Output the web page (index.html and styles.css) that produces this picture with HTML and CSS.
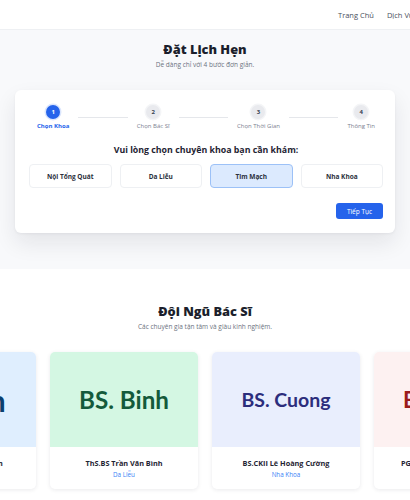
FILE: index.html
```html
<!DOCTYPE html>
<html lang="vi">
<head>
<meta charset="utf-8">
<title>Đặt Lịch Hẹn</title>
<link rel="stylesheet" href="styles.css">
</head>
<body>
<header class="topbar">
  <nav class="nav">
    <a class="nav-link">Trang Chủ</a>
    <a class="nav-link">Dịch Vụ</a>
  </nav>
</header>

<section class="hero">
  <h1 class="title">Đặt Lịch Hẹn</h1>
  <p class="subtitle">Dễ dàng chỉ với 4 bước đơn giản.</p>

  <div class="booking-card">
    <div class="stepper">
      <div class="step active">
        <span class="step-circle">1</span>
        <span class="step-label">Chọn Khoa</span>
      </div>
      <div class="step-line"></div>
      <div class="step">
        <span class="step-circle">2</span>
        <span class="step-label">Chọn Bác Sĩ</span>
      </div>
      <div class="step-line"></div>
      <div class="step">
        <span class="step-circle">3</span>
        <span class="step-label">Chọn Thời Gian</span>
      </div>
      <div class="step-line"></div>
      <div class="step">
        <span class="step-circle">4</span>
        <span class="step-label">Thông Tin</span>
      </div>
    </div>

    <h2 class="question">Vui lòng chọn chuyên khoa bạn cần khám:</h2>
    <div class="options">
      <button class="option">Nội Tổng Quát</button>
      <button class="option">Da Liễu</button>
      <button class="option selected">Tim Mạch</button>
      <button class="option">Nha Khoa</button>
    </div>
    <div class="actions">
      <button class="btn-primary">Tiếp Tục</button>
    </div>
  </div>
</section>

<section class="team">
  <h2 class="title">Đội Ngũ Bác Sĩ</h2>
  <p class="subtitle">Các chuyên gia tận tâm và giàu kinh nghiệm.</p>
  <div class="doctors">
    <div class="doctor">
      <div class="doctor-photo blue">BS. An</div>
      <div class="doctor-info">
        <div class="doctor-name">PGS.TS Nguyễn Văn An</div>
        <div class="doctor-spec">Nội Tổng Quát</div>
      </div>
    </div>
    <div class="doctor">
      <div class="doctor-photo green">BS. Binh</div>
      <div class="doctor-info">
        <div class="doctor-name">ThS.BS Trần Văn Bình</div>
        <div class="doctor-spec">Da Liễu</div>
      </div>
    </div>
    <div class="doctor">
      <div class="doctor-photo indigo">BS. Cuong</div>
      <div class="doctor-info">
        <div class="doctor-name">BS.CKII Lê Hoàng Cường</div>
        <div class="doctor-spec">Nha Khoa</div>
      </div>
    </div>
    <div class="doctor">
      <div class="doctor-photo red">BS. Dung</div>
      <div class="doctor-info">
        <div class="doctor-name">PGS.TS Phạm Thị Mỹ Dung</div>
        <div class="doctor-spec">Tim Mạch</div>
      </div>
    </div>
  </div>
</section>
</body>
</html>
```

FILE: styles.css
```css
* { box-sizing: border-box; }

body {
  margin: 0;
  font-family: "Open Sans", "Noto Sans", "DejaVu Sans", sans-serif;
  color: #1f2433;
  background: #ffffff;
}

.topbar {
  height: 30px;
  background: #ffffff;
  border-bottom: 1px solid #eef0f3;
  display: flex;
  align-items: center;
  padding-left: 338px;
  overflow: hidden;
  white-space: nowrap;
}

.nav {
  display: flex;
  gap: 13px;
  flex-shrink: 0;
}

.nav-link {
  font-size: 7.5px;
  color: #4b5160;
}

.hero {
  background: #f8f9fb;
  padding: 9px 15px 36px;
  text-align: center;
}

.title {
  margin: 0;
  font-size: 12.8px;
  line-height: 20px;
  font-weight: 800;
  color: #1b1f2c;
}

.subtitle {
  margin: 1px 0 0;
  font-size: 6.5px;
  line-height: 10px;
  color: #6b7280;
}

.booking-card {
  margin-top: 20px;
  background: #ffffff;
  border-radius: 6px;
  box-shadow: 0 10px 22px rgba(17, 24, 39, 0.09), 0 1px 3px rgba(17, 24, 39, 0.05);
  padding: 15px 12px 14px 14px;
  text-align: left;
}

.stepper {
  display: flex;
  align-items: center;
  padding: 0 8px;
}

.step {
  display: flex;
  flex-direction: column;
  align-items: center;
  gap: 3px;
}

.step-circle {
  width: 14px;
  height: 14px;
  border-radius: 50%;
  background: #e9eaee;
  box-shadow: 0 0 0 1.5px #f4f5f7;
  color: #374151;
  font-size: 6px;
  font-weight: 700;
  display: flex;
  align-items: center;
  justify-content: center;
}

.step-label {
  font-size: 6px;
  line-height: 8px;
  color: #7b8190;
  white-space: nowrap;
}

.step.active .step-circle {
  background: #2563eb;
  box-shadow: 0 0 0 1.5px #dbe6fd;
  color: #ffffff;
}

.step.active .step-label {
  color: #2563eb;
  font-weight: 700;
}

.step-line {
  flex: 1;
  height: 1px;
  background: #e5e7eb;
  margin: 0 9px;
}

.question {
  margin: 14px 0 0;
  text-align: center;
  font-size: 8.8px;
  line-height: 13px;
  font-weight: 700;
  color: #1f2433;
}

.options {
  margin-top: 7px;
  display: grid;
  grid-template-columns: repeat(4, 1fr);
  gap: 8px;
}

.option {
  height: 24px;
  border: 1px solid #eef0f3;
  border-radius: 4px;
  background: #ffffff;
  font-family: inherit;
  font-size: 6.5px;
  font-weight: 700;
  color: #2a2f3c;
  padding: 0;
}

.option.selected {
  background: #dceafe;
  border-color: #9cc1f7;
}

.actions {
  margin-top: 15px;
  display: flex;
  justify-content: flex-end;
}

.btn-primary {
  width: 47px;
  height: 16px;
  border: none;
  border-radius: 3px;
  background: #2563eb;
  color: #ffffff;
  font-family: inherit;
  font-size: 6.5px;
  font-weight: 500;
  padding: 0;
}

.team {
  padding: 32px 0 20px;
  text-align: center;
  overflow: hidden;
}

.doctors {
  margin-top: 20px;
  display: flex;
  justify-content: center;
  gap: 14px;
}

.doctor {
  flex: 0 0 148px;
  border-radius: 5px;
  background: #ffffff;
  box-shadow: 0 1px 4px rgba(17, 24, 39, 0.09);
  overflow: hidden;
}

.doctor-photo {
  height: 95px;
  display: flex;
  align-items: center;
  justify-content: center;
  font-family: "Lato", "Open Sans", sans-serif;
  font-weight: 700;
  white-space: nowrap;
}

.doctor-photo.blue { background: #dfeefe; color: #0c3f6e; font-size: 30px; }
.doctor-photo.green { background: #d4f7e3; color: #135a3b; font-size: 24.2px; }
.doctor-photo.indigo { background: #e9eefd; color: #2c2d7c; font-size: 19.5px; }
.doctor-photo.red { background: #fdf1f1; color: #9b1c1c; font-size: 22px; }

.doctor-info {
  padding: 11px 4px 10px;
}

.doctor-name {
  font-size: 7.3px;
  line-height: 10px;
  font-weight: 700;
  color: #1f2433;
  white-space: nowrap;
}

.doctor-spec {
  margin-top: 2px;
  font-size: 6.3px;
  line-height: 9px;
  color: #3b82f6;
}
```
